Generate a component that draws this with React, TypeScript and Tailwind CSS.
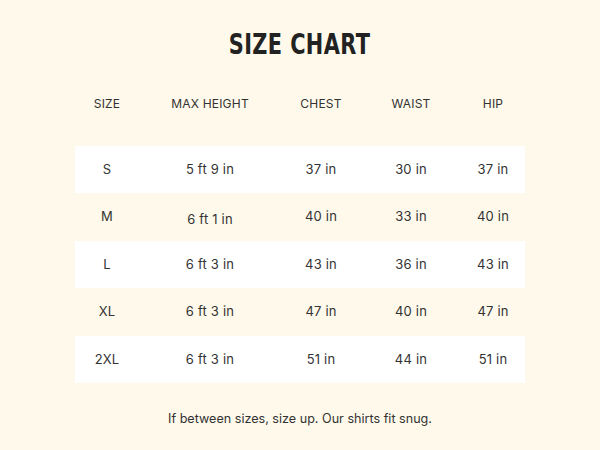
const rows = [
  { size: 'S', height: '5 ft 9 in', chest: '37 in', waist: '30 in', hip: '37 in' },
  { size: 'M', height: '6 ft 1 in', chest: '40 in', waist: '33 in', hip: '40 in' },
  { size: 'L', height: '6 ft 3 in', chest: '43 in', waist: '36 in', hip: '43 in' },
  { size: 'XL', height: '6 ft 3 in', chest: '47 in', waist: '40 in', hip: '47 in' },
  { size: '2XL', height: '6 ft 3 in', chest: '51 in', waist: '44 in', hip: '51 in' },
];

const cols = 'grid grid-cols-[64px_142px_80px_100px_64px] items-center text-center';

export default function App() {
  return (
    <div className="flex h-[450px] w-[600px] flex-col items-center bg-[#fef9ea] font-['Inter',sans-serif] text-[#333]">
      <h1 className="mt-[27px] scale-x-[0.8] font-['DejaVu_Sans_Condensed','DejaVu_Sans',sans-serif] text-[29px] leading-[34px] font-bold tracking-[0.5px] text-[#222]">
        SIZE CHART
      </h1>

      <div className="mt-[37px] w-[450px]">
        {/* header */}
        <div className={`${cols} h-[12px] text-[12px] leading-[12px] tracking-[0.2px]`}>
          <div>SIZE</div>
          <div>MAX HEIGHT</div>
          <div>CHEST</div>
          <div>WAIST</div>
          <div>HIP</div>
        </div>

        {/* rows */}
        <div className="mt-[36px]">
          {rows.map((r, i) => (
            <div
              key={r.size}
              className={`${cols} h-[47.4px] text-[13px] tracking-[0.2px] ${i % 2 === 0 ? 'bg-white' : ''}`}
            >
              <div>{r.size}</div>
              <div className={r.size === 'M' ? 'mt-[5px]' : ''}>{r.height}</div>
              <div>{r.chest}</div>
              <div>{r.waist}</div>
              <div>{r.hip}</div>
            </div>
          ))}
        </div>
      </div>

      <p className="mt-[27px] text-[12.6px]">If between sizes, size up. Our shirts fit snug.</p>
    </div>
  );
}
